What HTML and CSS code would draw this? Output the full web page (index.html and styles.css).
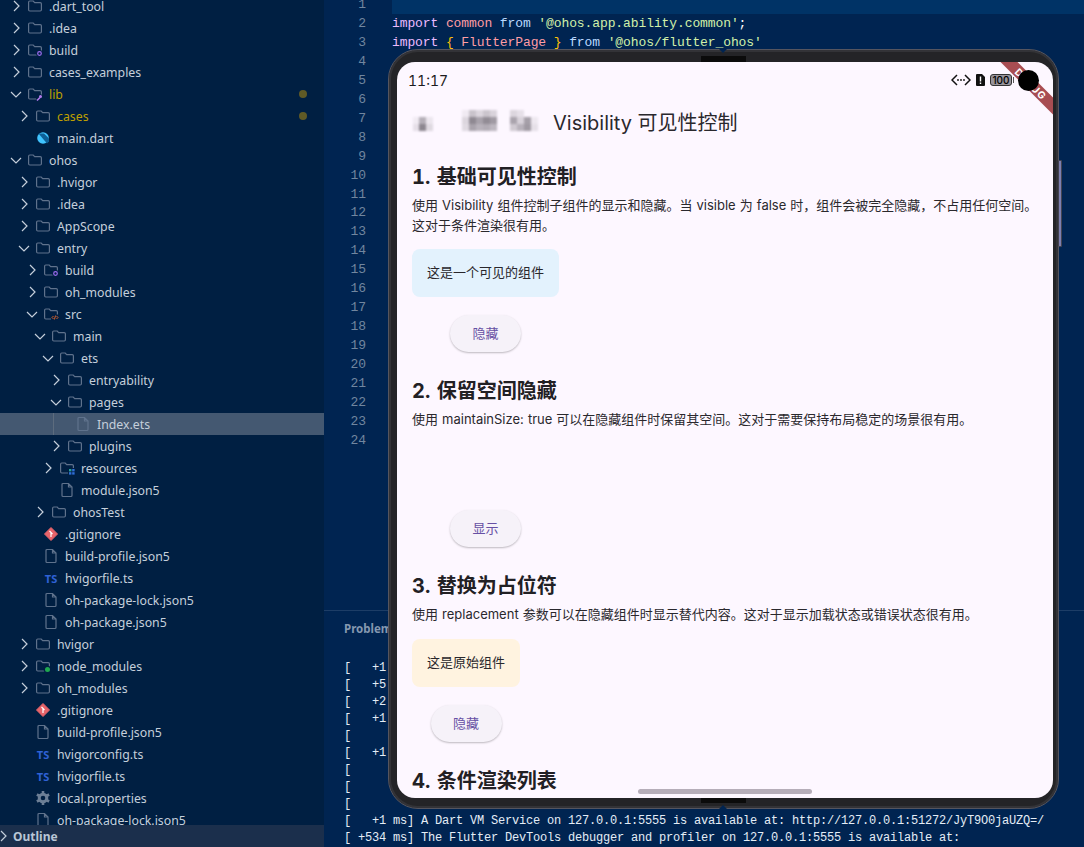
FILE: index.html
```html
<!DOCTYPE html>
<html lang="zh">
<head>
  <meta charset="UTF-8" />
  <title>Visibility 可见性控制</title>
  <link rel="stylesheet" href="styles.css">
</head>
<body>

  <svg class="defs" width="0" height="0">
    <symbol id="open" viewBox="0 0 16 16"><path d="M3 6l5 5 5-5" fill="none" stroke="#c5cfdb" stroke-width="1.2"/></symbol>
    <symbol id="closed" viewBox="0 0 16 16"><path d="M6 3l5 5-5 5" fill="none" stroke="#c5cfdb" stroke-width="1.2"/></symbol>
    <symbol id="folder" viewBox="0 0 16 16"><path d="M1.6 4.2a1.2 1.2 0 0 1 1.2-1.2h3.4l1.5 1.6h5.500a1.200 1.200 0 0 1 1.200 1.200v6a1.200 1.200 0 0 1-1.200 1.200H2.800a1.200 1.200 0 0 1-1.200-1.200z" fill="none" stroke="#5f728c" stroke-width="1.200"/></symbol>
    <symbol id="file" viewBox="0 0 16 16"><path d="M3 2.500a1 1 0 0 1 1-1h5.500l3.500 3.500v8.500a1 1 0 0 1-1 1H4a1 1 0 0 1-1-1zM9.500 1.500v3.500H13" fill="none" stroke="#5f728c" stroke-width="1.200"/></symbol>
    <symbol id="git" viewBox="0 0 16 16"><path d="M8 1.500l6.500 6.500L8 14.500 1.500 8z" fill="#e8646a" stroke="#e8646a" stroke-linejoin="round"/><path d="M6.500 5l3 3M8 6.500v4.500" stroke="#fff" stroke-width="1.200"/></symbol>
    <symbol id="gear" viewBox="0 0 16 16"><circle cx="8" cy="8" r="3.800" fill="none" stroke="#6d7f96" stroke-width="3"/><path d="M8 1v3M8 12v3M1.900 4.500l2.600 1.500M11.500 10l2.600 1.500M1.900 11.500l2.600-1.500M11.500 6l2.600-1.500" stroke="#6d7f96" stroke-width="2.600"/></symbol>
    <symbol id="dart" viewBox="0 0 16 16"><circle cx="8" cy="8" r="5.800" fill="#40c4ff"/><path d="M3.500 3.500h5.500l5 5v3l-2 2z" fill="#0d5f96"/></symbol>
  </svg>

  <div class="page">
    <aside class="side">
      <div class="tree">
        <div class="row l0"><svg class="tw"><use href="#closed"/></svg><svg class="ic"><use href="#folder"/></svg><span>.dart_tool</span></div>
        <div class="row l0"><svg class="tw"><use href="#closed"/></svg><svg class="ic"><use href="#folder"/></svg><span>.idea</span></div>
        <div class="row l0"><svg class="tw"><use href="#closed"/></svg><svg class="ic" viewBox="0 0 16 16"><use href="#folder" width="16" height="16"/><circle cx="12.500" cy="11.500" r="3.400" fill="#001f42"/><circle cx="12.500" cy="11.500" r="1.800" fill="none" stroke="#9c6cf0" stroke-width="1.200"/></svg><span>build</span></div>
        <div class="row l0"><svg class="tw"><use href="#closed"/></svg><svg class="ic"><use href="#folder"/></svg><span>cases_examples</span></div>
        <div class="row l0 mod"><svg class="tw"><use href="#open"/></svg><svg class="ic" viewBox="0 0 16 16"><use href="#folder" width="16" height="16"/><circle cx="12.500" cy="11.500" r="3.600" fill="#001f42"/><path d="M10 14.500l3-3" stroke="#b47cf0" stroke-width="1.600"/><circle cx="13.500" cy="10.500" r="1.500" fill="#b47cf0"/></svg><span>lib</span><i class="dot"></i></div>
        <div class="row l1 mod"><svg class="tw"><use href="#closed"/></svg><svg class="ic"><use href="#folder"/></svg><span>cases</span><i class="dot"></i></div>
        <div class="row l1"><i class="tw"></i><svg class="ic"><use href="#dart"/></svg><span>main.dart</span></div>
        <div class="row l0"><svg class="tw"><use href="#open"/></svg><svg class="ic"><use href="#folder"/></svg><span>ohos</span></div>
        <div class="row l1"><svg class="tw"><use href="#closed"/></svg><svg class="ic"><use href="#folder"/></svg><span>.hvigor</span></div>
        <div class="row l1"><svg class="tw"><use href="#closed"/></svg><svg class="ic"><use href="#folder"/></svg><span>.idea</span></div>
        <div class="row l1"><svg class="tw"><use href="#closed"/></svg><svg class="ic"><use href="#folder"/></svg><span>AppScope</span></div>
        <div class="row l1"><svg class="tw"><use href="#open"/></svg><svg class="ic"><use href="#folder"/></svg><span>entry</span></div>
        <div class="row l2"><svg class="tw"><use href="#closed"/></svg><svg class="ic" viewBox="0 0 16 16"><use href="#folder" width="16" height="16"/><circle cx="12.500" cy="11.500" r="3.400" fill="#001f42"/><circle cx="12.500" cy="11.500" r="1.800" fill="none" stroke="#9c6cf0" stroke-width="1.200"/></svg><span>build</span></div>
        <div class="row l2"><svg class="tw"><use href="#closed"/></svg><svg class="ic"><use href="#folder"/></svg><span>oh_modules</span></div>
        <div class="row l2"><svg class="tw"><use href="#open"/></svg><svg class="ic" viewBox="0 0 16 16"><use href="#folder" width="16" height="16"/><rect x="8" y="8.500" width="8" height="6" fill="#001f42"/><path d="M10.500 10l-1.500 1.500 1.500 1.500M13.500 10l1.500 1.500-1.500 1.500M12.600 9.500l-1.200 4" fill="none" stroke="#d9622b"/></svg><span>src</span></div>
        <div class="row l3"><svg class="tw"><use href="#open"/></svg><svg class="ic"><use href="#folder"/></svg><span>main</span></div>
        <div class="row l4"><svg class="tw"><use href="#open"/></svg><svg class="ic"><use href="#folder"/></svg><span>ets</span></div>
        <div class="row l5"><svg class="tw"><use href="#closed"/></svg><svg class="ic"><use href="#folder"/></svg><span>entryability</span></div>
        <div class="row l5"><svg class="tw"><use href="#open"/></svg><svg class="ic"><use href="#folder"/></svg><span>pages</span></div>
        <div class="row l6 sel"><i class="guide"></i><i class="tw"></i><svg class="ic"><use href="#file"/></svg><span>Index.ets</span></div>
        <div class="row l5"><svg class="tw"><use href="#closed"/></svg><svg class="ic"><use href="#folder"/></svg><span>plugins</span></div>
        <div class="row l4"><svg class="tw"><use href="#closed"/></svg><svg class="ic" viewBox="0 0 16 16"><use href="#folder" width="16" height="16"/><rect x="9" y="8" width="7" height="7" fill="#001f42"/><rect x="10" y="9" width="2.400" height="2.400" fill="#2aa198"/><rect x="13.200" y="9" width="2.400" height="2.400" fill="#2f6fd8"/><rect x="10" y="12.200" width="2.400" height="2.400" fill="#2f6fd8"/><rect x="13.200" y="12.200" width="2.400" height="2.400" fill="#2f6fd8"/></svg><span>resources</span></div>
        <div class="row l4"><i class="tw"></i><svg class="ic"><use href="#file"/></svg><span>module.json5</span></div>
        <div class="row l3"><svg class="tw"><use href="#closed"/></svg><svg class="ic"><use href="#folder"/></svg><span>ohosTest</span></div>
        <div class="row l2"><i class="tw"></i><svg class="ic"><use href="#git"/></svg><span>.gitignore</span></div>
        <div class="row l2"><i class="tw"></i><svg class="ic"><use href="#file"/></svg><span>build-profile.json5</span></div>
        <div class="row l2"><i class="tw"></i><b class="ts">TS</b><span>hvigorfile.ts</span></div>
        <div class="row l2"><i class="tw"></i><svg class="ic"><use href="#file"/></svg><span>oh-package-lock.json5</span></div>
        <div class="row l2"><i class="tw"></i><svg class="ic"><use href="#file"/></svg><span>oh-package.json5</span></div>
        <div class="row l1"><svg class="tw"><use href="#closed"/></svg><svg class="ic"><use href="#folder"/></svg><span>hvigor</span></div>
        <div class="row l1"><svg class="tw"><use href="#closed"/></svg><svg class="ic" viewBox="0 0 16 16"><use href="#folder" width="16" height="16"/><circle cx="12.500" cy="11.500" r="3.800" fill="#001f42"/><circle cx="12.500" cy="11.500" r="2.500" fill="#1fa84f"/></svg><span>node_modules</span></div>
        <div class="row l1"><svg class="tw"><use href="#closed"/></svg><svg class="ic"><use href="#folder"/></svg><span>oh_modules</span></div>
        <div class="row l1"><i class="tw"></i><svg class="ic"><use href="#git"/></svg><span>.gitignore</span></div>
        <div class="row l1"><i class="tw"></i><svg class="ic"><use href="#file"/></svg><span>build-profile.json5</span></div>
        <div class="row l1"><i class="tw"></i><b class="ts">TS</b><span>hvigorconfig.ts</span></div>
        <div class="row l1"><i class="tw"></i><b class="ts">TS</b><span>hvigorfile.ts</span></div>
        <div class="row l1"><i class="tw"></i><svg class="ic"><use href="#gear"/></svg><span>local.properties</span></div>
        <div class="row l1"><i class="tw"></i><svg class="ic"><use href="#file"/></svg><span>oh-package-lock.json5</span></div>
      </div>
      <div class="outline"><svg class="tw"><use href="#closed"/></svg><span>Outline</span></div>
    </aside>

    <main class="main">
      <div class="editor">
        <div class="gutter">
          <div>1</div><div>2</div><div>3</div><div>4</div><div>5</div><div>6</div><div>7</div><div>8</div>
          <div>9</div><div>10</div><div>11</div><div>12</div><div>13</div><div>14</div><div>15</div><div>16</div>
          <div>17</div><div>18</div><div>19</div><div>20</div><div>21</div><div>22</div><div>23</div><div>24</div>
        </div>
        <div class="code">
          <div class="line cur"></div>
          <div class="line"><span class="kw">import</span> <span class="var">common</span> <span class="fr">from</span> <span class="str">'@ohos.app.ability.common'</span><span class="pl">;</span></div>
          <div class="line"><span class="kw">import</span> <span class="br">{</span> <span class="var">FlutterPage</span> <span class="br">}</span> <span class="fr">from</span> <span class="str">'@ohos/flutter_ohos'</span></div>
        </div>
      </div>
      <div class="panel">
        <div class="tabs">Problems</div>
        <div class="term">
          <div>[   +1 ms]</div>
          <div>[   +5 ms]</div>
          <div>[   +2 ms]</div>
          <div>[   +1 ms]</div>
          <div>[</div>
          <div>[   +1 ms]</div>
          <div>[</div>
          <div>[</div>
          <div>[</div>
          <div>[   +1 ms] A Dart VM Service on 127.0.0.1:5555 is available at: http://127.0.0.1:51272/JyT9O0jaUZQ=/</div>
          <div>[ +534 ms] The Flutter DevTools debugger and profiler on 127.0.0.1:5555 is available at:</div>
        </div>
      </div>
    </main>
  </div>

  <div class="phone">
    <i class="hinge top"></i>
    <i class="hinge bottom"></i>
    <i class="volume"></i>
    <div class="screen">
      <div class="status">
        <span class="time">11:17</span>
        <div class="status-icons">
          <svg width="20" height="12" viewBox="0 0 20 12"><path d="M6 1L1 6l5 5M14 1l5 5-5 5" fill="none" stroke="#111" stroke-width="1.500"/><circle cx="7" cy="6" r=".9" fill="#111"/><circle cx="10" cy="6" r=".9" fill="#111"/><circle cx="13" cy="6" r=".9" fill="#111"/></svg>
          <svg width="9" height="12" viewBox="0 0 9 12"><path d="M1 0h5l3 3v8a1 1 0 0 1-1 1H1a1 1 0 0 1-1-1V1a1 1 0 0 1 1-1z" fill="#111"/><path d="M4.500 2.500v5M4.500 8.600v1.400" stroke="#fff" stroke-width="1.400"/></svg>
          <div class="battery"><span>100</span></div>
        </div>
      </div>
      <div class="titlebar">
        <svg class="mosaic" width="131" height="24" viewBox="0 0 131 24" shape-rendering="crispEdges">
          <rect x="0" y="7" width="6" height="7" fill="#f1ebf3"/><rect x="0" y="14" width="6" height="7" fill="#e6dfe8"/>
          <rect x="6" y="7" width="7" height="7" fill="#b5afb8"/><rect x="6" y="14" width="7" height="7" fill="#8d8790"/>
          <rect x="13" y="7" width="7" height="7" fill="#ece6ee"/><rect x="13" y="14" width="7" height="7" fill="#dfd9e1"/>
          <rect x="49" y="0" width="7" height="7" fill="#f0eaf2"/><rect x="56" y="0" width="7" height="7" fill="#c9c3cb"/><rect x="63" y="0" width="7" height="7" fill="#dcd6de"/><rect x="70" y="0" width="7" height="7" fill="#cbc5cd"/><rect x="77" y="0" width="7" height="7" fill="#d9d3db"/>
          <rect x="49" y="7" width="7" height="7" fill="#dcd6de"/><rect x="56" y="7" width="7" height="7" fill="#8f8992"/><rect x="63" y="7" width="7" height="7" fill="#a8a2ab"/><rect x="70" y="7" width="7" height="7" fill="#928c95"/><rect x="77" y="7" width="7" height="7" fill="#a09aa3"/>
          <rect x="49" y="14" width="7" height="7" fill="#e0dae2"/><rect x="56" y="14" width="7" height="7" fill="#a9a3ac"/><rect x="63" y="14" width="7" height="7" fill="#b8b2bb"/><rect x="70" y="14" width="7" height="7" fill="#b2acb5"/><rect x="77" y="14" width="7" height="7" fill="#bdb7c0"/>
          <rect x="97" y="0" width="7" height="7" fill="#dcd6de"/><rect x="104" y="0" width="7" height="7" fill="#e6e0e8"/>
          <rect x="97" y="7" width="7" height="7" fill="#aaa4ad"/><rect x="104" y="7" width="7" height="7" fill="#d8d2da"/><rect x="111" y="7" width="7" height="7" fill="#a6a0a9"/><rect x="118" y="7" width="7" height="7" fill="#eee8f0"/>
          <rect x="97" y="14" width="7" height="7" fill="#d0cad2"/><rect x="104" y="14" width="7" height="7" fill="#b8b2bb"/><rect x="111" y="14" width="7" height="7" fill="#a09aa3"/><rect x="118" y="14" width="7" height="7" fill="#e6e0e8"/>
        </svg>
        <h1>Visibility 可见性控制</h1>
      </div>

      <div class="content">
        <section class="demo first">
          <h2>1. 基础可见性控制</h2>
          <p>使用 Visibility 组件控制子组件的显示和隐藏。当 visible 为 false 时，组件会被完全隐藏，不占用任何空间。这对于条件渲染很有用。</p>
          <div class="stack">
            <div class="box blue">这是一个可见的组件</div>
            <button class="btn">隐藏</button>
          </div>
        </section>

        <section class="demo">
          <h2>2. 保留空间隐藏</h2>
          <p>使用 maintainSize: true 可以在隐藏组件时保留其空间。这对于需要保持布局稳定的场景很有用。</p>
          <div class="stack">
            <div class="box ghost"></div>
            <button class="btn">显示</button>
          </div>
        </section>

        <section class="demo">
          <h2>3. 替换为占位符</h2>
          <p>使用 replacement 参数可以在隐藏组件时显示替代内容。这对于显示加载状态或错误状态很有用。</p>
          <div class="stack">
            <div class="box orange">这是原始组件</div>
            <button class="btn">隐藏</button>
          </div>
        </section>

        <section class="demo">
          <h2>4. 条件渲染列表</h2>
        </section>
      </div>

      <div class="banner">DEBUG</div>
      <i class="camera"></i>
      <i class="homebar"></i>
    </div>
  </div>

</body>
</html>
```

FILE: styles.css
```css
html, body {
  margin: 0;
  height: 100%;
  overflow: hidden;
}
body {
  background: #002451;
  font-family: "Noto Sans", sans-serif;
}
.defs {
  position: absolute;
}
.page {
  display: flex;
  height: 847px;
}

/* explorer */
.side {
  width: 324px;
  flex: none;
  display: flex;
  flex-direction: column;
  height: 847px;
  overflow: hidden;
  background: #001f42;
  color: #c5cfdb;
  font-size: 12.3px;
}
.tree {
  flex: 1;
  min-height: 0;
  overflow: hidden;
  margin-top: -5px;
}
.row {
  position: relative;
  display: flex;
  align-items: center;
  height: 22px;
  white-space: nowrap;
}
.l0 { padding-left: 8px; }
.l1 { padding-left: 16px; }
.l2 { padding-left: 24px; }
.l3 { padding-left: 32px; }
.l4 { padding-left: 40px; }
.l5 { padding-left: 48px; }
.l6 { padding-left: 56px; }
.tw {
  width: 16px;
  height: 16px;
  flex: none;
}
.ic {
  width: 16px;
  height: 16px;
  flex: none;
  margin-left: 3px;
  margin-right: 6px;
}
.ts {
  width: 16px;
  flex: none;
  margin-left: 3px;
  margin-right: 6px;
  color: #2f62d6;
  font-size: 11px;
  text-align: center;
}
.mod {
  color: #bf9f00;
}
.dot {
  position: absolute;
  right: 17px;
  width: 8px;
  height: 8px;
  border-radius: 50%;
  background: #5f5a26;
}
.sel {
  background: #445871;
}
.guide {
  position: absolute;
  left: 53px;
  top: 0;
  bottom: 0;
  width: 1px;
  background: #5d6c7e;
}
.outline {
  display: flex;
  align-items: center;
  height: 22px;
  flex: none;
  background: #1b2f4c;
  font-size: 12px;
  font-weight: 700;
  color: #b9c6d6;
}
.outline .tw {
  margin-left: -5px;
  margin-right: 2px;
}

/* editor */
.main {
  flex: 1;
  display: flex;
  flex-direction: column;
  min-width: 0;
  height: 847px;
  overflow: hidden;
}
.editor {
  display: flex;
  height: 606px;
  flex: none;
  margin-top: -4px;
  padding-bottom: 8px;
  font-family: "Liberation Mono", monospace;
  font-size: 13px;
  line-height: 19px;
}
.gutter {
  width: 42px;
  flex: none;
  line-height: 18.96px;
  text-align: right;
  color: #71869f;
}
.code {
  flex: 1;
  margin-top: -1px;
  margin-left: 26px;
  letter-spacing: -0.1px;
}
.line {
  height: 19px;
  white-space: pre;
}
.cur {
  background: #003366;
}
.kw { color: #ebbbff; }
.var { color: #ff9da4; }
.fr { color: #bbdaff; }
.str { color: #d1f1a9; }
.br { color: #ffc107; }
.pl { color: #ffffff; }

/* panel */
.panel {
  flex: 1;
  border-top: 1px solid #1d3d66;
}
.tabs {
  padding: 10px 0 0 20px;
  font-size: 11.5px;
  font-weight: 700;
  color: #8598b0;
  height: 25px;
}
.term {
  margin-top: 14px;
  padding-left: 20px;
  font-family: "Liberation Mono", monospace;
  font-size: 12px;
  letter-spacing: -0.2px;
  line-height: 17px;
  color: #e4edf6;
}
.term div {
  white-space: pre;
}

/* phone sits on top of the editor */
.phone {
  position: absolute;
  left: 388px;
  top: 49px;
  width: 671px;
  height: 760px;
  box-sizing: border-box;
  padding: 12px 5px 10px 8px;
  background: #242427;
  border: 1px solid #55555f;
  border-radius: 30px;
  box-shadow: inset 0 0 0 2px #333337;
}
.hinge {
  position: absolute;
  left: 312px;
  width: 45px;
  height: 6px;
  background: #0b0b0b;
}
.hinge.top {
  top: 6px;
}
.hinge.bottom {
  bottom: 5px;
}
.hinge.top::before {
  content: "";
  position: absolute;
  left: 18px;
  top: -7px;
  border: 4px solid transparent;
  border-top-color: #002451;
}
.hinge.bottom::after {
  content: "";
  position: absolute;
  left: 18px;
  bottom: -6px;
  border: 4px solid transparent;
  border-bottom-color: #002451;
}
.volume {
  position: absolute;
  right: -4px;
  top: 110px;
  width: 2px;
  height: 85px;
  background: #7d7fb0;
  border: 1px solid #444450;
  border-radius: 1px;
}
.screen {
  position: relative;
  height: 100%;
  overflow: hidden;
  background: #fdf7ff;
  border-radius: 18px;
  color: #1d1b20;
  font-family: Inter, "Noto Sans CJK SC", sans-serif;
}
.status {
  display: flex;
  align-items: center;
  justify-content: space-between;
  height: 36px;
  padding: 0 41px 0 11px;
}
.time {
  font-size: 14px;
  font-feature-settings: "tnum";
}
.status-icons {
  display: flex;
  align-items: center;
  gap: 5px;
}
.battery {
  position: relative;
  width: 22px;
  height: 12px;
  box-sizing: border-box;
  border: 1px solid #333;
  border-radius: 3px;
  background: #98949b;
  font-size: 10px;
  line-height: 10px;
  font-weight: 500;
  text-align: center;
  color: #000;
}
.battery::after {
  content: "";
  position: absolute;
  right: -3px;
  top: 2px;
  width: 1px;
  height: 6px;
  background: #555;
}
.titlebar {
  display: flex;
  align-items: center;
  height: 47px;
  padding-left: 16px;
}
.mosaic {
  margin-right: 9px;
  filter: blur(0.8px);
}
h1 {
  margin: 0;
  font-size: 20px;
  font-weight: 400;
  color: #2a282d;
}
.content {
  padding: 0 15px;
}
.demo {
  margin-top: 25px;
}
.demo.first {
  margin-top: 18px;
}
.first .stack {
  margin-top: 14px;
}
h2 {
  margin: 0;
  font-size: 20px;
  line-height: 28px;
  font-weight: 700;
  font-feature-settings: "tnum";
  word-spacing: 1px;
  color: #222024;
}
p {
  margin: 4px 0 0;
  font-size: 13px;
  line-height: 20px;
  word-spacing: 0.4px;
  color: #2a282d;
}
.stack {
  display: inline-flex;
  flex-direction: column;
  align-items: center;
  margin-top: 15px;
  vertical-align: top;
}
.box {
  display: flex;
  align-items: center;
  height: 48px;
  box-sizing: border-box;
  padding: 0 15px 4px;
  border-radius: 8px;
  font-size: 13px;
  color: #29272c;
}
.blue {
  background: #e3f2fd;
}
.orange {
  background: #fff3e0;
}
.ghost {
  width: 147px;
}
.btn {
  width: 71px;
  height: 37px;
  margin-top: 18px;
  padding: 0 0 3px;
  border: none;
  border-radius: 19px;
  background: #f6f2f9;
  box-shadow: 0 1px 2px rgba(0,0,0,0.25);
  color: #6750a4;
  font-family: inherit;
  font-size: 13px;
}
.banner {
  position: absolute;
  right: -18px;
  top: 16px;
  width: 80px;
  height: 12px;
  background: #a84d52;
  transform: rotate(45deg);
  color: #fff;
  font-size: 10px;
  line-height: 12px;
  font-weight: 700;
  letter-spacing: 1px;
  text-align: center;
}
.camera {
  position: absolute;
  right: 14px;
  top: 8px;
  width: 21px;
  height: 21px;
  border-radius: 50%;
  background: #000;
}
.homebar {
  position: absolute;
  left: 241px;
  bottom: 4px;
  width: 174px;
  height: 5px;
  border-radius: 3px;
  background: #b6aeb9;
}
```
